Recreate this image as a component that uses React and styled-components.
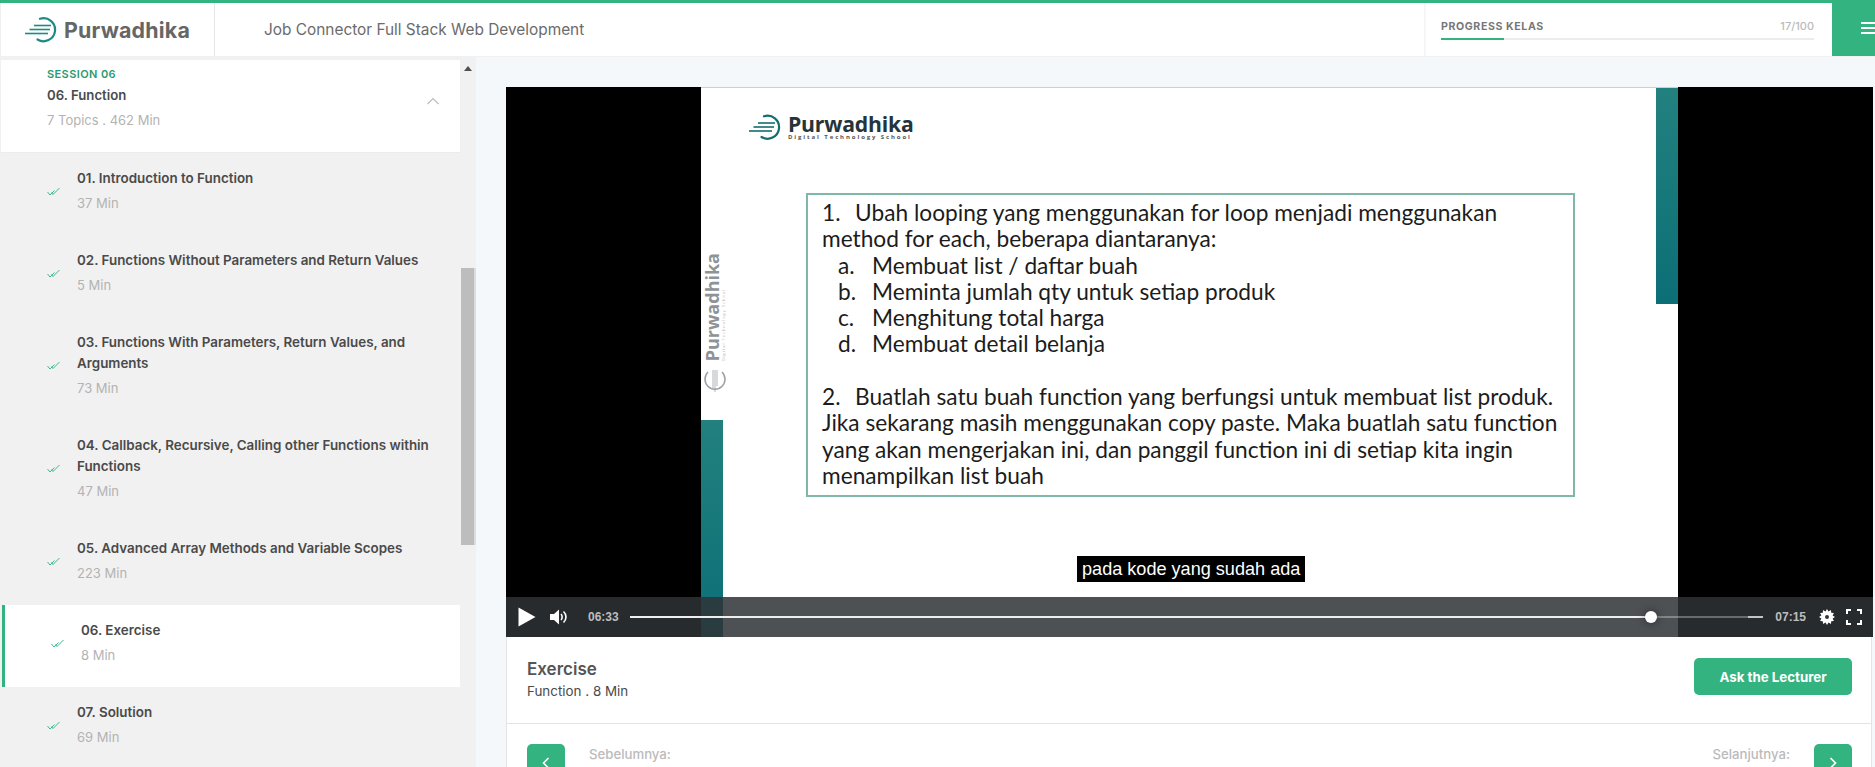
import React from "react";
import styled, { createGlobalStyle } from "styled-components";

const FONT = `"Inter", "Liberation Sans", sans-serif`;
const GREEN = "#33b380";

const Global = createGlobalStyle`
  html, body { margin: 0; padding: 0; height: 767px; overflow: hidden; background: #f4f8fb; }
  * { box-sizing: border-box; }
  body { font-family: ${FONT}; }
`;

const Page = styled.div`
  width: 1875px; height: 767px; overflow: hidden; display: flex; flex-direction: column;
`;
const Header = styled.header`
  flex: 0 0 57px; display: flex; background: #fff;
  border-top: 3px solid ${GREEN}; border-bottom: 1px solid #eef0f2;
`;
const LogoCell = styled.div`
  width: 215px; display: flex; align-items: center; padding-left: 24px; gap: 5px;
  border-right: 1px solid #e4e7ea; border-left: 1px solid #eee;
`;
const LogoText = styled.span`
  font-size: 21.4px; font-weight: 700; color: #666; letter-spacing: 0.2px;
`;
const CourseTitle = styled.div`
  flex: 1; padding-left: 49px; font-size: 15.4px; line-height: 53px; color: #6b6b6b;
`;
const ProgressCell = styled.div`
  width: 408px; padding: 13px 18px 0 15px; border-left: 2px solid #f4f6f8;
`;
const ProgressLabels = styled.div`
  display: flex; justify-content: space-between; align-items: center; height: 20px;
`;
const ProgressLabel = styled.span`
  font-size: 10.6px; font-weight: 700; letter-spacing: 0.6px; color: #777;
`;
const ProgressCount = styled.span`
  font-size: 11px; font-weight: 500; color: #bbb;
`;
const ProgressTrack = styled.div`
  height: 2px; background: #e9edf0; margin-top: 2px;
`;
const ProgressFill = styled.div`
  height: 100%; background: ${GREEN};
`;
const MenuButton = styled.div`
  width: 43px; background: ${GREEN}; display: flex; flex-direction: column; gap: 3px;
  padding: 19px 0 0 29px;
`;
const MenuLine = styled.span`
  display: block; width: 14px; height: 2px; background: #fff;
`;

const Body = styled.div`
  flex: 1; display: flex; min-height: 0;
`;
const Sidebar = styled.aside`
  width: 476px; display: flex; background: #f1f1f1; overflow: hidden; padding-top: 3px;
`;
const SidebarList = styled.div`
  width: 460px; padding-left: 1px;
`;
const SessionHead = styled.div`
  height: 93px; background: #fff; padding: 6px 28px 0 46px; position: relative;
  border-bottom: 1px solid #ececec;
`;
const SessionTag = styled.div`
  font-size: 11px; font-weight: 600; letter-spacing: 0.4px; color: #2f9a70; line-height: 16px;
`;
const SessionName = styled.div`
  font-size: 13.2px; font-weight: 600; color: #4a4a4a; line-height: 21px; margin-top: 3px;
`;
const SessionMeta = styled.div`
  font-size: 13px; color: #b3b3b3; line-height: 21px; margin-top: 4px;
`;
const Chevron = styled.svg`
  position: absolute; right: 20px; top: 37px;
`;
const Lesson = styled.div`
  display: flex; align-items: flex-start;
  padding: ${(p) => (p.$active ? "15px 0 0 46px" : "15px 0 0 46px")};
  height: ${(p) => p.$height}px; background: ${(p) => (p.$active ? "#fff" : "transparent")};
  margin-left: ${(p) => (p.$active ? "1px" : "0")};
  border-left: ${(p) => (p.$active ? `3px solid ${GREEN}` : "none")};
`;
const CheckWrap = styled.div`
  width: 30px; flex: none; align-self: flex-start;
  margin-top: ${(p) => p.$offset}px;
`;
const LessonText = styled.div`
  flex: 1; padding-right: 20px;
`;
const LessonTitle = styled.div`
  font-size: 13.4px; font-weight: 600; color: #4a4a4a; line-height: 21px; white-space: nowrap;
`;
const LessonMin = styled.div`
  font-size: 13px; color: #b3b3b3; line-height: 21px; margin-top: 4px;
`;
const ScrollTrack = styled.div`
  width: 16px; background: #f1f1f1; display: flex; flex-direction: column; align-items: flex-start;
`;
const ScrollArrow = styled.div`
  width: 0; height: 0; margin: 6px 0 0 4px; border: 4px solid transparent; border-top: 0;
  border-bottom: 5px solid #505050;
`;
const ScrollThumb = styled.div`
  width: 16px; height: 277px; margin-top: 197px; background: #bdbdbd;
  border-left: 1px solid #f1f1f1; border-right: 2px solid #dddddd;
`;

const Main = styled.main`
  flex: 1; padding: 30px 2px 0 30px; min-width: 0;
`;
const Video = styled.div`
  height: 550px; background: #000; display: flex; justify-content: center; position: relative;
  overflow: hidden;
`;
const Slide = styled.div`
  width: 977px; background: #fff; position: relative; border-top: 1px solid #c9d0d6;
`;
const TealBlock = styled.div`
  position: absolute; width: 22px; background: linear-gradient(180deg, #22817f, #0c6f76);
  ${(p) => p.$side}: 0; top: ${(p) => p.$top}px; height: ${(p) => p.$h}px;
`;
const SlideLogo = styled.div`
  position: absolute; left: 48px; top: 26px; display: flex; gap: 5px; align-items: flex-start;
`;
const SlideBrand = styled.div`
  font-family: "Open Sans", sans-serif; font-size: 21.2px; font-weight: 700; color: #24343a;
  line-height: 20px; letter-spacing: -0.2px;
`;
const SlideBrandSub = styled.div`
  font-family: "Open Sans", sans-serif; font-size: 6px; font-weight: 700; letter-spacing: 1.9px;
  color: #555; line-height: 7px;
`;
const SideLogo = styled.div`
  position: absolute; left: 2px; top: 165px; display: flex; flex-direction: column;
  align-items: center; gap: 5px;
`;
const SideBrand = styled.div`
  writing-mode: vertical-rl; transform: rotate(180deg); display: flex; flex-direction: column;
  align-items: flex-start;
`;
const SideBrandMain = styled.span`
  font-family: "Open Sans", sans-serif; font-size: 18px; font-weight: 700; color: #8d9396;
  line-height: 18px;
`;
const SideBrandSub = styled.span`
  font-family: "Open Sans", sans-serif; font-size: 4px; letter-spacing: 1px; color: #b4b4b4;
  line-height: 5px;
`;
const TextBox = styled.div`
  position: absolute; left: 105px; top: 105px; width: 769px; height: 304px;
  border: 2px solid #7fb8a9; padding: 5px 12px 0 14px;
  font-family: "Lato", sans-serif; font-size: 22.7px; line-height: 26.3px; color: #1c1c1c;
`;
const NumberedLine = styled.div`
  display: flex; white-space: nowrap;
`;
const Marker = styled.span`
  flex: none; width: ${(p) => p.$w}px; margin-left: ${(p) => p.$indent || 0}px;
`;
const PlainLine = styled.div`
  white-space: nowrap;
`;
const Gap = styled.div`
  height: 26.3px;
`;
const Caption = styled.div`
  position: absolute; left: 571px; top: 469px; height: 26px; padding: 0 5px; background: #000;
  color: #fff; font-family: "Liberation Sans", sans-serif; font-size: 18.1px; line-height: 26px;
  white-space: nowrap;
`;
const Controls = styled.div`
  position: absolute; left: 0; right: 0; bottom: 0; height: 40px; background: rgba(47, 51, 54, 0.85);
  display: flex; align-items: center; padding: 0 11px 0 12px;
`;
const PlayIcon = styled.svg`
  flex: none;
`;
const VolumeIcon = styled.svg`
  flex: none; margin-left: 14px;
`;
const TimeLabel = styled.span`
  font-family: "Liberation Sans", sans-serif; font-size: 12px; font-weight: 700; color: #bdbdbd;
  flex: none; margin: ${(p) => p.$margin};
`;
const Slider = styled.div`
  flex: 1; height: 2px; background: rgba(255, 255, 255, 0.3); position: relative;
`;
const SliderEnd = styled.div`
  position: absolute; right: 0; top: 0; height: 2px; width: 15px; background: rgba(255, 255, 255, 0.6);
`;
const SliderPlayed = styled.div`
  position: absolute; left: 0; top: 0; height: 2px; background: #eee;
`;
const SliderKnob = styled.div`
  position: absolute; top: -5px; width: 12px; height: 12px; margin-left: -6px; border-radius: 50%;
  background: #fff; box-shadow: 0 0 8px rgba(0, 0, 0, 0.5);
`;
const GearIcon = styled.svg`
  flex: none; margin-left: 13px;
`;
const FullIcon = styled.svg`
  flex: none; margin-left: 11px;
`;

const Panel = styled.section`
  background: #fff; border-left: 1px solid #e2e4e6; border-right: 1px solid #e2e4e6; margin-right: 1px;
`;
const InfoRow = styled.div`
  height: 87px; display: flex; align-items: flex-start; justify-content: space-between;
  padding: 21px 19px 0 20px; border-bottom: 1px solid #e2e4e6;
`;
const InfoTitle = styled.div`
  font-size: 17px; font-weight: 600; color: #555; line-height: 22px;
`;
const InfoSub = styled.div`
  font-size: 13.4px; color: #4a4a4a; line-height: 20px; margin-top: 1px;
`;
const AskButton = styled.button`
  width: 158px; height: 37px; border: 0; border-radius: 5px; background: ${GREEN}; color: #fff;
  font-family: ${FONT}; font-size: 13.3px; font-weight: 700; margin-top: 0; padding: 0;
`;
const NavRow = styled.div`
  display: flex; justify-content: space-between; padding: 20px 19px 0 20px;
`;
const NavSide = styled.div`
  display: flex; gap: 24px;
`;
const NavLabel = styled.span`
  font-size: 13.2px; font-weight: 500; color: #bbb; line-height: 20px;
`;
const NavButton = styled.div`
  width: 38px; height: 38px; border-radius: 5px; background: ${GREEN}; display: flex;
  align-items: center; justify-content: center;
`;

const Check = () => (
  <svg width="14" height="10" viewBox="0 0 14 10" fill="none" stroke="#3dbb8a" strokeWidth="1">
    <path d="M0.5 5 L3 8 L7.5 3.5" />
    <path d="M4.5 5.5 L6 7.5 L12.5 1" />
  </svg>
);

const BrandMark = ({ w = 34, h = 26, color = "#1c8a86" }) => (
  <svg width={w} height={h} viewBox="0 0 34 26" fill="none">
    <path d="M15 1.8 A 11.5 11.5 0 1 1 12.5 22.5" stroke={color} strokeWidth="2.2" strokeLinecap="round" />
    <path d="M9 8.5 H 26" stroke={color} strokeWidth="1.6" />
    <path d="M4.5 12.5 H 25" stroke={color} strokeWidth="1.6" />
    <path d="M0 16.5 H 23" stroke={color} strokeWidth="1.6" />
  </svg>
);

const lessons = [
  { t: ["01. Introduction to Function"], m: "37 Min" },
  { t: ["02. Functions Without Parameters and Return Values"], m: "5 Min" },
  { t: ["03. Functions With Parameters, Return Values, and", "Arguments"], m: "73 Min" },
  { t: ["04. Callback, Recursive, Calling other Functions within", "Functions"], m: "47 Min" },
  { t: ["05. Advanced Array Methods and Variable Scopes"], m: "223 Min" },
  { t: ["06. Exercise"], m: "8 Min", active: true },
  { t: ["07. Solution"], m: "69 Min" },
];

export default function App() {
  return (
    <Page>
      <Global />
      <Header>
        <LogoCell>
          <BrandMark />
          <LogoText>Purwadhika</LogoText>
        </LogoCell>
        <CourseTitle>Job Connector Full Stack Web Development</CourseTitle>
        <ProgressCell>
          <ProgressLabels>
            <ProgressLabel>PROGRESS KELAS</ProgressLabel>
            <ProgressCount>17/100</ProgressCount>
          </ProgressLabels>
          <ProgressTrack>
            <ProgressFill style={{ width: "17%" }} />
          </ProgressTrack>
        </ProgressCell>
        <MenuButton>
          <MenuLine />
          <MenuLine />
          <MenuLine />
        </MenuButton>
      </Header>
      <Body>
        <Sidebar>
          <SidebarList>
            <SessionHead>
              <SessionTag>SESSION 06</SessionTag>
              <SessionName>06. Function</SessionName>
              <SessionMeta>7 Topics . 462 Min</SessionMeta>
              <Chevron width="14" height="8" viewBox="0 0 14 8" fill="none" stroke="#bdbdbd" strokeWidth="1.2">
                <path d="M1.5 7 L7 1.5 L12.5 7" />
              </Chevron>
            </SessionHead>
            {lessons.map((l) => (
              <Lesson key={l.m} $active={l.active} $height={l.t.length > 1 ? 103 : 82}>
                <CheckWrap $offset={l.t.length > 1 ? 23 : 13}>
                  <Check />
                </CheckWrap>
                <LessonText>
                  {l.t.map((line) => (
                    <LessonTitle key={line}>{line}</LessonTitle>
                  ))}
                  <LessonMin>{l.m}</LessonMin>
                </LessonText>
              </Lesson>
            ))}
          </SidebarList>
          <ScrollTrack>
            <ScrollArrow />
            <ScrollThumb />
          </ScrollTrack>
        </Sidebar>
        <Main>
          <Video>
            <Slide>
              <TealBlock $side="right" $top={0} $h={216} />
              <TealBlock $side="left" $top={332} $h={220} />
              <SlideLogo>
                <BrandMark w={34} h={27} color="#136f6d" />
                <div>
                  <SlideBrand>Purwadhika</SlideBrand>
                  <SlideBrandSub>Digital Technology School</SlideBrandSub>
                </div>
              </SlideLogo>
              <SideLogo>
                <SideBrand>
                  <SideBrandMain>Purwadhika</SideBrandMain>
                  <SideBrandSub>Digital Technology School</SideBrandSub>
                </SideBrand>
                <svg width="22" height="28" viewBox="0 0 22 28" fill="none" stroke="#9aa0a3">
                  <path d="M4 6 A 10 10 0 1 0 18 6" strokeWidth="1.5" />
                  <path d="M9 4 V 22 M11 4 V 26 M13 4 V 20" strokeWidth="0.8" />
                </svg>
              </SideLogo>
              <TextBox>
                <NumberedLine><Marker $w={33}>1.</Marker>Ubah looping yang menggunakan for loop menjadi menggunakan</NumberedLine>
                <PlainLine>method for each, beberapa diantaranya:</PlainLine>
                <NumberedLine><Marker $indent={16} $w={34}>a.</Marker>Membuat list / daftar buah</NumberedLine>
                <NumberedLine><Marker $indent={16} $w={34}>b.</Marker>Meminta jumlah qty untuk setiap produk</NumberedLine>
                <NumberedLine><Marker $indent={16} $w={34}>c.</Marker>Menghitung total harga</NumberedLine>
                <NumberedLine><Marker $indent={16} $w={34}>d.</Marker>Membuat detail belanja</NumberedLine>
                <Gap />
                <NumberedLine><Marker $w={33}>2.</Marker>Buatlah satu buah function yang berfungsi untuk membuat list produk.</NumberedLine>
                <PlainLine>Jika sekarang masih menggunakan copy paste. Maka buatlah satu function</PlainLine>
                <PlainLine>yang akan mengerjakan ini, dan panggil function ini di setiap kita ingin</PlainLine>
                <PlainLine>menampilkan list buah</PlainLine>
              </TextBox>
            </Slide>
            <Caption>pada kode yang sudah ada</Caption>
            <Controls>
              <PlayIcon width="18" height="20" viewBox="0 0 18 20"><path d="M0.5 0.5 L17.5 10 L0.5 19.5 Z" fill="#fff" /></PlayIcon>
              <VolumeIcon width="19" height="16" viewBox="0 0 19 16" fill="none">
                <path d="M0 5 H4 L9 0.5 V15.5 L4 11 H0 Z" fill="#fff" />
                <path d="M11 5 C12.5 6.5 12.5 9.5 11 11" stroke="#fff" strokeWidth="1.6" />
                <path d="M13.5 2.5 C16.8 5.5 16.8 10.5 13.5 13.5" stroke="#fff" strokeWidth="1.6" />
              </VolumeIcon>
              <TimeLabel $margin="0 11px 0 19px">06:33</TimeLabel>
              <Slider>
                <SliderEnd />
                <SliderPlayed style={{ width: "90.1%" }} />
                <SliderKnob style={{ left: "90.1%" }} />
              </Slider>
              <TimeLabel $margin="0 0 0 12px">07:15</TimeLabel>
              <GearIcon width="16" height="16" viewBox="0 0 16 16">
                <path d="M8 0 L9.5 2.4 L12 1.1 L12.2 3.8 L14.9 4 L13.6 6.5 L16 8 L13.6 9.5 L14.9 12 L12.2 12.2 L12 14.9 L9.5 13.6 L8 16 L6.5 13.6 L4 14.9 L3.8 12.2 L1.1 12 L2.4 9.5 L0 8 L2.4 6.5 L1.1 4 L3.8 3.8 L4 1.1 L6.5 2.4 Z" fill="#fff" />
                <circle cx="8" cy="8" r="2" fill="#33373a" />
              </GearIcon>
              <FullIcon width="16" height="16" viewBox="0 0 16 16" fill="none" stroke="#fff" strokeWidth="2">
                <path d="M1 5 V1 H5 M11 1 H15 V5 M15 11 V15 H11 M5 15 H1 V11" />
              </FullIcon>
            </Controls>
          </Video>
          <Panel>
            <InfoRow>
              <div>
                <InfoTitle>Exercise</InfoTitle>
                <InfoSub>Function . 8 Min</InfoSub>
              </div>
              <AskButton>Ask the Lecturer</AskButton>
            </InfoRow>
            <NavRow>
              <NavSide>
                <NavButton>
                  <svg width="8" height="12" viewBox="0 0 8 12" fill="none" stroke="#fff" strokeWidth="1.6"><path d="M6.5 1 L1.5 6 L6.5 11" /></svg>
                </NavButton>
                <NavLabel>Sebelumnya:</NavLabel>
              </NavSide>
              <NavSide>
                <NavLabel>Selanjutnya:</NavLabel>
                <NavButton>
                  <svg width="8" height="12" viewBox="0 0 8 12" fill="none" stroke="#fff" strokeWidth="1.6"><path d="M1.5 1 L6.5 6 L1.5 11" /></svg>
                </NavButton>
              </NavSide>
            </NavRow>
          </Panel>
        </Main>
      </Body>
    </Page>
  );
}
